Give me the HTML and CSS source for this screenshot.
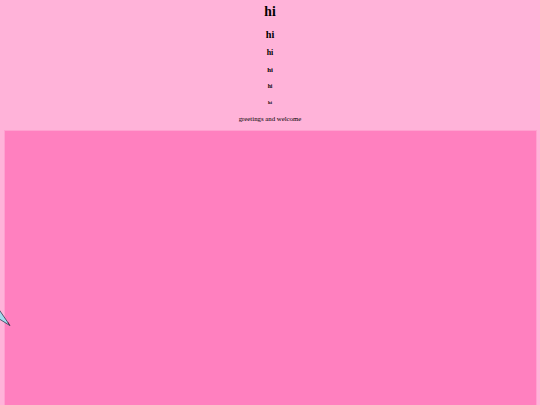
FILE: index.html
```html
<!DOCTYPE html>
<html>
<head>
<meta charset="utf-8">
<title>hi</title>
<link rel="stylesheet" href="styles.css">
</head>
<body>
<header class="intro">
  <h1 class="h h1">hi</h1>
  <h2 class="h h2">hi</h2>
  <h3 class="h h3">hi</h3>
  <h4 class="h h4">hi</h4>
  <h5 class="h h5">hi</h5>
  <h6 class="h h6">hi</h6>
  <p class="greet">greetings and welcome</p>
</header>
<div class="board"></div>
<svg class="pencil" width="14" height="30" viewBox="0 0 14 30">
  <polygon points="-1,9.5 -1,18.8 10,25.6" fill="#a3dbee" stroke="#2c3b4e" stroke-width="0.8" stroke-linejoin="round"/>
  <polygon points="7.4,22.6 8.6,22.4 10,25.6" fill="#6e1236"/>
</svg>
</body>
</html>
```

FILE: styles.css
```css
html {
  height: 100%;
  background: #ffb3d9;
  overflow: hidden;
}
body {
  height: 100%;
  box-sizing: border-box;
  margin: 0;
  padding: 3.6px 3.5px 0;
  display: flex;
  flex-direction: column;
  font-family: "Liberation Serif", "Times New Roman", serif;
  color: #000;
  text-align: center;
  overflow: hidden;
}
.intro {
  display: flow-root;
}
.h {
  font-weight: bold;
}
.h1 {
  font-size: 13.6px;
  margin: 0 0 9.2px;
}
.h2 {
  font-size: 10.2px;
  margin: 8.6px 0;
}
.h3 {
  font-size: 7.9px;
  margin: 8px 0;
}
.h4 {
  font-size: 6.8px;
  margin: 9.1px 0;
}
.h5 {
  font-size: 5.6px;
  margin: 9.5px 0;
}
.h6 {
  font-size: 4.6px;
  margin: 10.6px 0;
}
.greet {
  font-size: 6.8px;
  margin: 10.6px 0 7.6px;
}
.board {
  flex: 1;
  background: #ff80bf;
  border: 1px solid #ffa0cf;
  border-bottom: 0;
}
.pencil {
  position: absolute;
  left: 0;
  top: 300px;
}
```
